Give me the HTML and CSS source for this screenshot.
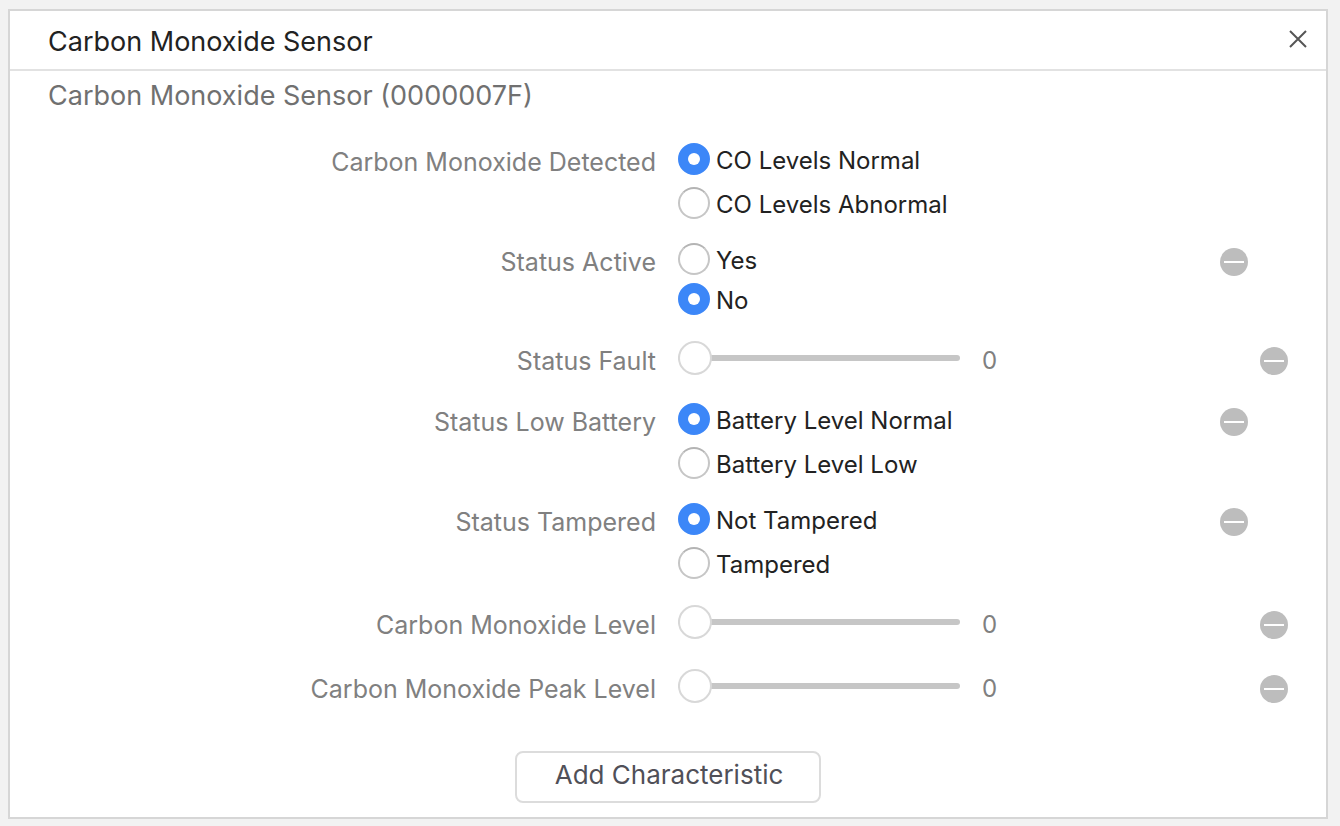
FILE: index.html
```html
<!DOCTYPE html>
<html lang="en">
<head>
<meta charset="utf-8">
<title>Carbon Monoxide Sensor</title>
<link rel="stylesheet" href="styles.css">
</head>
<body>
<main class="dialog">
  <header class="dialog-header">
    <h1 class="dialog-title">Carbon Monoxide Sensor</h1>
    <button class="close" type="button" aria-label="Close"><svg width="18" height="18" viewBox="0 0 18 18" fill="none" stroke="#555" stroke-width="2"><path d="M1 1l16 16M17 1L1 17"/></svg></button>
  </header>
  <h2 class="service">Carbon Monoxide Sensor (0000007F)</h2>
  <form class="fields">
    <div class="row" role="radiogroup" aria-labelledby="l-detected">
      <span class="label" id="l-detected">Carbon Monoxide Detected</span>
      <div class="options">
        <label class="option"><input class="radio" type="radio" name="detected" checked><span class="option-text">CO Levels Normal</span></label>
        <label class="option"><input class="radio" type="radio" name="detected"><span class="option-text">CO Levels Abnormal</span></label>
      </div>
    </div>
    <div class="row" role="radiogroup" aria-labelledby="l-active">
      <span class="label" id="l-active">Status Active</span>
      <div class="options options-tight">
        <label class="option"><input class="radio" type="radio" name="active"><span class="option-text">Yes</span></label>
        <label class="option"><input class="radio" type="radio" name="active" checked><span class="option-text">No</span></label>
      </div>
      <button class="remove" type="button" aria-label="Remove Status Active"></button>
    </div>
    <div class="row row-slider">
      <label class="label" for="fault">Status Fault</label>
      <div class="slider"><input class="range" id="fault" type="range" min="0" max="255" value="0"><output class="value" for="fault">0</output></div>
      <button class="remove" type="button" aria-label="Remove Status Fault"></button>
    </div>
    <div class="row" role="radiogroup" aria-labelledby="l-battery">
      <span class="label" id="l-battery">Status Low Battery</span>
      <div class="options">
        <label class="option"><input class="radio" type="radio" name="battery" checked><span class="option-text">Battery Level Normal</span></label>
        <label class="option"><input class="radio" type="radio" name="battery"><span class="option-text">Battery Level Low</span></label>
      </div>
      <button class="remove" type="button" aria-label="Remove Status Low Battery"></button>
    </div>
    <div class="row" role="radiogroup" aria-labelledby="l-tampered">
      <span class="label" id="l-tampered">Status Tampered</span>
      <div class="options">
        <label class="option"><input class="radio" type="radio" name="tampered" checked><span class="option-text">Not Tampered</span></label>
        <label class="option"><input class="radio" type="radio" name="tampered"><span class="option-text">Tampered</span></label>
      </div>
      <button class="remove" type="button" aria-label="Remove Status Tampered"></button>
    </div>
    <div class="row row-slider">
      <label class="label" for="level">Carbon Monoxide Level</label>
      <div class="slider"><input class="range" id="level" type="range" min="0" max="100" value="0"><output class="value" for="level">0</output></div>
      <button class="remove" type="button" aria-label="Remove Carbon Monoxide Level"></button>
    </div>
    <div class="row row-slider">
      <label class="label" for="peak">Carbon Monoxide Peak Level</label>
      <div class="slider"><input class="range" id="peak" type="range" min="0" max="100" value="0"><output class="value" for="peak">0</output></div>
      <button class="remove" type="button" aria-label="Remove Carbon Monoxide Peak Level"></button>
    </div>
    <button class="add" type="button">Add Characteristic</button>
  </form>
</main>
</body>
</html>
```

FILE: styles.css
```css
* {
  box-sizing: border-box;
}

body {
  margin: 0;
  padding: 9px 12px 7px 8px;
  background: #f2f2f2;
  color: #222;
  font-family: Inter, "Liberation Sans", sans-serif;
}

button,
input {
  margin: 0;
  font: inherit;
}

.dialog {
  padding-bottom: 14px;
  background: #fff;
  border: 2px solid #d6d6d6;
}

.dialog-header {
  display: flex;
  align-items: flex-start;
  justify-content: space-between;
  height: 60px;
  padding: 15px 15px 0 38px;
  border-bottom: 2px solid #e2e2e2;
}

.dialog-title,
.service {
  margin: 0;
  font-size: 27px;
  font-weight: 400;
  line-height: 32px;
}

.close {
  display: flex;
  padding: 4px;
  border: 0;
  background: none;
}

.service {
  padding: 9px 38px 0;
  color: #707070;
}

.fields {
  display: flex;
  flex-direction: column;
  gap: 16px;
  margin-top: 27px;
}

.row {
  display: grid;
  grid-template-columns: 50% 1fr auto;
  align-items: start;
}

.label {
  padding: 3px 12px 0 0;
  color: #808080;
  font-size: 25px;
  line-height: 40px;
  text-align: right;
}

.options {
  display: flex;
  flex-direction: column;
  gap: 4px;
  padding-left: 10px;
}

.options-tight {
  gap: 0;
}

.option {
  display: flex;
  align-items: center;
  gap: 6px;
  height: 40px;
  font-size: 24px;
  line-height: 32px;
}

.option-text {
  padding-top: 3px;
}

.radio {
  appearance: none;
  display: grid;
  place-items: center;
  width: 32px;
  height: 32px;
  border: 2px solid #c6c6c6;
  border-top-color: #b4b4b4;
  border-radius: 50%;
  background: #fff;
}

.radio:checked {
  border-color: #3c87f8;
  background: #3c87f8;
}

.radio:checked::before {
  content: "";
  width: 12px;
  height: 12px;
  border-radius: 50%;
  background: #fff;
}

.row-slider {
  height: 48px;
}

.row-slider .label {
  padding-top: 6px;
}

.slider {
  display: flex;
  align-items: center;
  gap: 22px;
  height: 46px;
  padding-left: 10px;
}

.range {
  appearance: none;
  width: 282px;
  height: 34px;
  background: none;
}

.range::-webkit-slider-runnable-track {
  height: 6px;
  border-radius: 3px;
  background: #c6c6c6;
}

.range::-webkit-slider-thumb {
  appearance: none;
  width: 34px;
  height: 34px;
  margin-top: -14px;
  border: 2px solid #d8d8d8;
  border-radius: 50%;
  background: #fff;
}

.value {
  padding-top: 5px;
  color: #808080;
  font-size: 24px;
}

.remove {
  display: grid;
  place-items: center;
  width: 28px;
  height: 28px;
  margin: 9px 78px 0 0;
  padding: 0;
  border: 0;
  border-radius: 50%;
  background: #bdbdbd;
}

.row-slider .remove {
  margin: 12px 38px 0 0;
}

.remove::before {
  content: "";
  width: 20px;
  height: 2px;
  background: #fff;
}

.add {
  align-self: center;
  margin-top: 24px;
  padding: 6px 36px 10px 38px;
  border: 2px solid #dcdcdc;
  border-radius: 8px;
  background: #fff;
  color: #505058;
  font-size: 26px;
  line-height: 32px;
}
```
